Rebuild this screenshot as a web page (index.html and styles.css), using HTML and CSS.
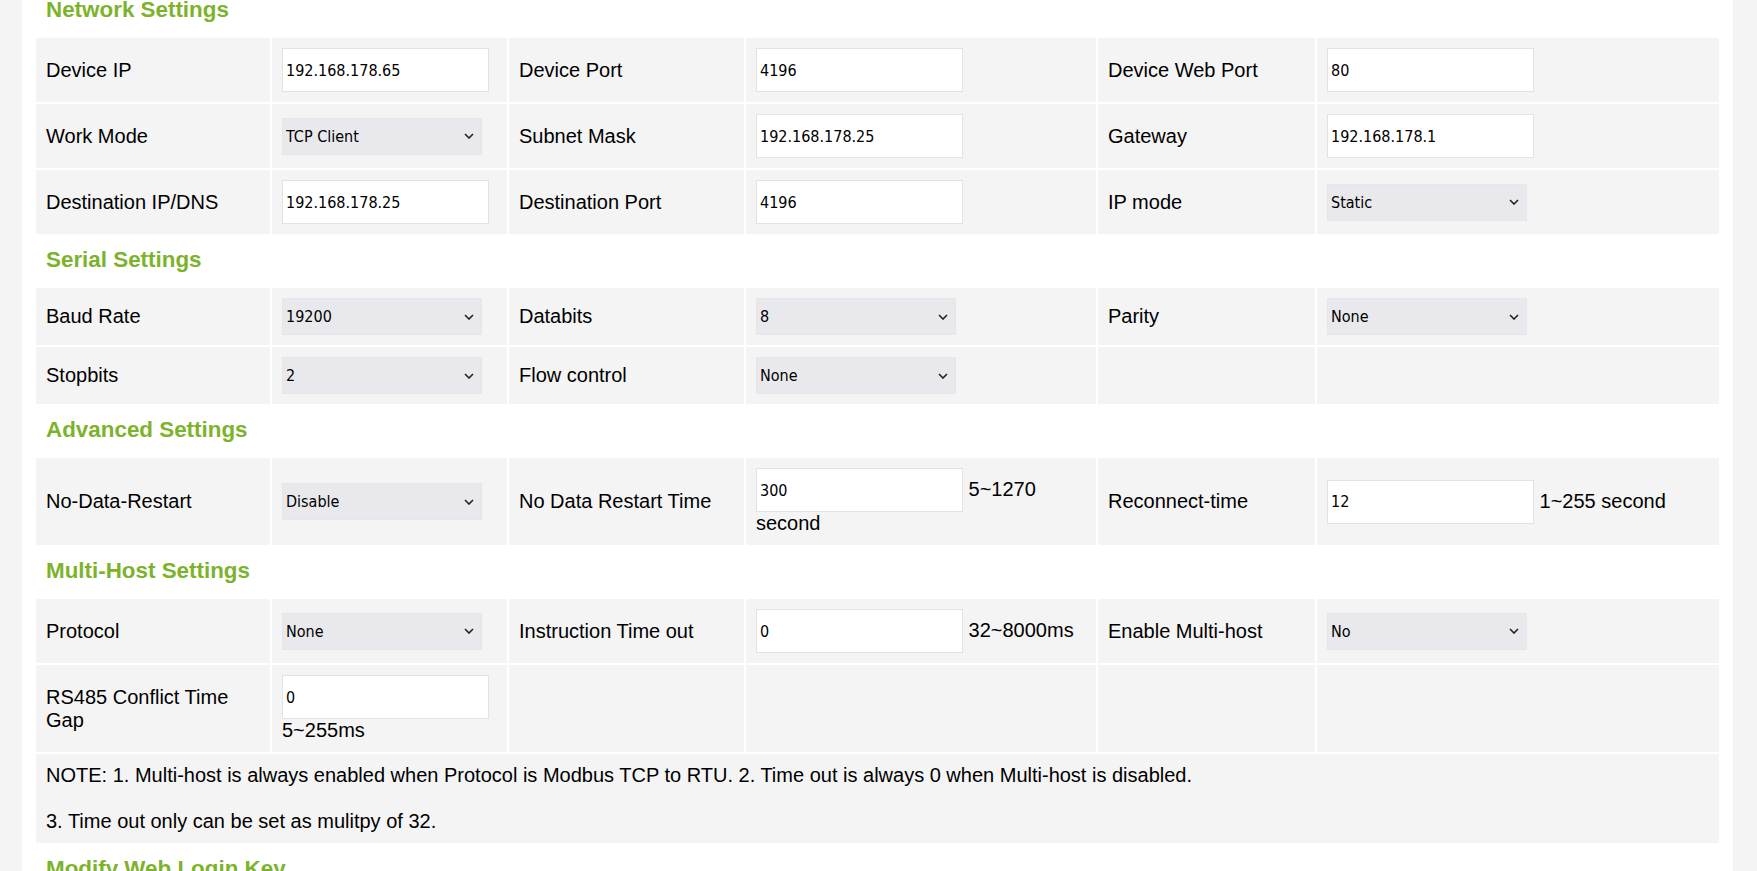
FILE: index.html
```html
<!DOCTYPE html>
<html lang="en">
<head>
<meta charset="utf-8">
<title>Settings</title>
<link rel="stylesheet" href="styles.css">
</head>
<body>
<div class="page">
  <main class="panel">

    <section class="group">
      <h2 class="group-title">Network Settings</h2>
      <div class="grid">
        <div class="cell"><span class="label">Device IP</span></div>
        <div class="cell"><div class="ctl"><input class="field" type="text" value="192.168.178.65"></div></div>
        <div class="cell"><span class="label">Device Port</span></div>
        <div class="cell"><div class="ctl"><input class="field" type="text" value="4196"></div></div>
        <div class="cell"><span class="label">Device Web Port</span></div>
        <div class="cell"><div class="ctl"><input class="field" type="text" value="80"></div></div>

        <div class="cell"><span class="label">Work Mode</span></div>
        <div class="cell"><div class="ctl"><span class="sel"><select class="choice"><option>TCP Client</option></select><svg class="chev" width="10" height="6" viewBox="0 0 10 6"><path d="M1 1 L5 5 L9 1" fill="none" stroke="#222" stroke-width="1.6"/></svg></span></div></div>
        <div class="cell"><span class="label">Subnet Mask</span></div>
        <div class="cell"><div class="ctl"><input class="field" type="text" value="192.168.178.25"></div></div>
        <div class="cell"><span class="label">Gateway</span></div>
        <div class="cell"><div class="ctl"><input class="field" type="text" value="192.168.178.1"></div></div>

        <div class="cell"><span class="label">Destination IP/DNS</span></div>
        <div class="cell"><div class="ctl"><input class="field" type="text" value="192.168.178.25"></div></div>
        <div class="cell"><span class="label">Destination Port</span></div>
        <div class="cell"><div class="ctl"><input class="field" type="text" value="4196"></div></div>
        <div class="cell"><span class="label">IP mode</span></div>
        <div class="cell"><div class="ctl"><span class="sel"><select class="choice"><option>Static</option></select><svg class="chev" width="10" height="6" viewBox="0 0 10 6"><path d="M1 1 L5 5 L9 1" fill="none" stroke="#222" stroke-width="1.6"/></svg></span></div></div>
      </div>
    </section>

    <section class="group">
      <h2 class="group-title">Serial Settings</h2>
      <div class="grid">
        <div class="cell"><span class="label">Baud Rate</span></div>
        <div class="cell"><div class="ctl"><span class="sel"><select class="choice"><option>19200</option></select><svg class="chev" width="10" height="6" viewBox="0 0 10 6"><path d="M1 1 L5 5 L9 1" fill="none" stroke="#222" stroke-width="1.6"/></svg></span></div></div>
        <div class="cell"><span class="label">Databits</span></div>
        <div class="cell"><div class="ctl"><span class="sel"><select class="choice"><option>8</option></select><svg class="chev" width="10" height="6" viewBox="0 0 10 6"><path d="M1 1 L5 5 L9 1" fill="none" stroke="#222" stroke-width="1.6"/></svg></span></div></div>
        <div class="cell"><span class="label">Parity</span></div>
        <div class="cell"><div class="ctl"><span class="sel"><select class="choice"><option>None</option></select><svg class="chev" width="10" height="6" viewBox="0 0 10 6"><path d="M1 1 L5 5 L9 1" fill="none" stroke="#222" stroke-width="1.6"/></svg></span></div></div>

        <div class="cell"><span class="label">Stopbits</span></div>
        <div class="cell"><div class="ctl"><span class="sel"><select class="choice"><option>2</option></select><svg class="chev" width="10" height="6" viewBox="0 0 10 6"><path d="M1 1 L5 5 L9 1" fill="none" stroke="#222" stroke-width="1.6"/></svg></span></div></div>
        <div class="cell"><span class="label">Flow control</span></div>
        <div class="cell"><div class="ctl"><span class="sel"><select class="choice"><option>None</option></select><svg class="chev" width="10" height="6" viewBox="0 0 10 6"><path d="M1 1 L5 5 L9 1" fill="none" stroke="#222" stroke-width="1.6"/></svg></span></div></div>
        <div class="cell"></div>
        <div class="cell"></div>
      </div>
    </section>

    <section class="group">
      <h2 class="group-title">Advanced Settings</h2>
      <div class="grid">
        <div class="cell"><span class="label">No-Data-Restart</span></div>
        <div class="cell"><div class="ctl"><span class="sel"><select class="choice"><option>Disable</option></select><svg class="chev" width="10" height="6" viewBox="0 0 10 6"><path d="M1 1 L5 5 L9 1" fill="none" stroke="#222" stroke-width="1.6"/></svg></span></div></div>
        <div class="cell"><span class="label">No Data Restart Time</span></div>
        <div class="cell"><div class="ctl"><input class="field" type="text" value="300"> 5~1270 second</div></div>
        <div class="cell"><span class="label">Reconnect-time</span></div>
        <div class="cell"><div class="ctl"><input class="field" type="text" value="12"> 1~255 second</div></div>
      </div>
    </section>

    <section class="group">
      <h2 class="group-title">Multi-Host Settings</h2>
      <div class="grid">
        <div class="cell"><span class="label">Protocol</span></div>
        <div class="cell"><div class="ctl"><span class="sel"><select class="choice"><option>None</option></select><svg class="chev" width="10" height="6" viewBox="0 0 10 6"><path d="M1 1 L5 5 L9 1" fill="none" stroke="#222" stroke-width="1.6"/></svg></span></div></div>
        <div class="cell"><span class="label">Instruction Time out</span></div>
        <div class="cell"><div class="ctl"><input class="field" type="text" value="0"> 32~8000ms</div></div>
        <div class="cell"><span class="label">Enable Multi-host</span></div>
        <div class="cell"><div class="ctl"><span class="sel"><select class="choice"><option>No</option></select><svg class="chev" width="10" height="6" viewBox="0 0 10 6"><path d="M1 1 L5 5 L9 1" fill="none" stroke="#222" stroke-width="1.6"/></svg></span></div></div>

        <div class="cell"><span class="label">RS485 Conflict Time Gap</span></div>
        <div class="cell"><div class="ctl"><input class="field" type="text" value="0"> 5~255ms</div></div>
        <div class="cell"></div>
        <div class="cell"></div>
        <div class="cell"></div>
        <div class="cell"></div>

        <div class="cell cell-wide"><div class="ctl">NOTE: 1. Multi-host is always enabled when Protocol is Modbus TCP to RTU. 2. Time out is always 0 when Multi-host is disabled.<br><br>3. Time out only can be set as mulitpy of 32.</div></div>
      </div>
    </section>

    <section class="group">
      <h2 class="group-title">Modify Web Login Key</h2>
    </section>

  </main>
</div>
</body>
</html>
```

FILE: styles.css
```css
html, body {
  margin: 0;
  padding: 0;
}

body {
  background: #f4f4f4;
  font-family: "Liberation Sans", Arial, sans-serif;
  font-size: 20px;
  color: #000;
  overflow: hidden;
}

.page {
  padding: 0 24px 0 22px;
}

.panel {
  background: #fff;
  padding: 0 14px 40px;
  margin-top: -16px;
}

.group-title {
  margin: 0;
  padding: 12px 10px 14px;
  font-size: 22.4px;
  line-height: 28px;
  font-weight: bold;
  color: #7cb32b;
}

.grid {
  display: grid;
  grid-template-columns: 234px 235px 235px 350px 217px 402px;
  gap: 2px;
}

.cell {
  background: #f4f4f4;
  padding: 10px;
  display: flex;
  align-items: center;
  min-width: 0;
}

.cell-wide {
  grid-column: 1 / -1;
}

.label {
  display: block;
}

.ctl {
  min-width: 0;
}

.field {
  box-sizing: border-box;
  width: 207px;
  height: 44px;
  margin: 0;
  padding: 0 3px;
  border: 1px solid #e2e2e2;
  background: #fff;
  font-family: "DejaVu Sans Condensed", "DejaVu Sans", sans-serif;
  font-size: 16px;
  color: #000;
  outline: none;
}

.sel {
  position: relative;
  display: inline-block;
}

.choice {
  box-sizing: border-box;
  width: 200px;
  height: 37px;
  margin: 0;
  padding: 0 20px 0 3px;
  border: 1px solid #e6e6ea;
  border-radius: 0;
  background: #e9e9ed;
  -webkit-appearance: none;
  appearance: none;
  font-family: "DejaVu Sans Condensed", "DejaVu Sans", sans-serif;
  font-size: 16px;
  color: #000;
  outline: none;
}

.chev {
  position: absolute;
  right: 8px;
  top: 50%;
  margin-top: -3px;
  pointer-events: none;
}
```
